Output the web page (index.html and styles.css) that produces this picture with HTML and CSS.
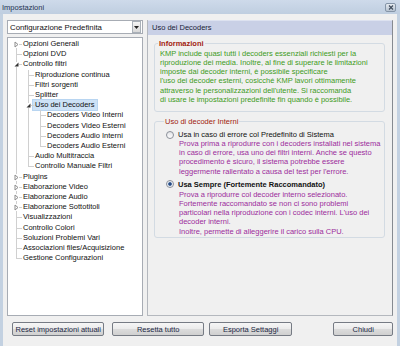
FILE: index.html
```html
<!DOCTYPE html>
<html lang="it">
<head>
  <meta charset="UTF-8">
  <title>Impostazioni</title>
  <link rel="stylesheet" href="styles.css">
</head>
<body>
  <div class="window">
    <div class="titlebar">
      <span class="title">Impostazioni</span>
      <span class="close-btn">
        <svg width="6" height="5" viewBox="0 0 6 5"><path d="M1 0.5 L5 4.5 M5 0.5 L1 4.5" stroke="#3d4a5a" stroke-width="1.1"/></svg>
      </span>
    </div>

    <div class="client">
      <div class="main">
        <div class="left-col">
          <div class="combo">
            <span class="combo-text">Configurazione Predefinita</span>
            <span class="combo-btn">
              <svg width="5" height="3" viewBox="0 0 5 3"><path d="M0 0 L5 0 L2.5 3 Z" fill="#222"/></svg>
            </span>
          </div>

          <div class="tree">
            <ul class="root">
              <li><span class="exp closed"><svg width="5" height="7" viewBox="0 0 5 7"><path d="M1 1 L4 3.5 L1 6 Z" fill="#fff" stroke="#8d8d8d"/></svg></span>Opzioni Generali</li>
              <li>Opzioni DVD</li>
              <li><span class="exp open"><svg width="5" height="5" viewBox="0 0 5 5"><path d="M4.5 0.5 L4.5 4.5 L0.5 4.5 Z" fill="#333"/></svg></span>Controllo filtri
                <ul>
                  <li>Riproduzione continua</li>
                  <li>Filtri sorgenti</li>
                  <li>Splitter</li>
                  <li><span class="exp open"><svg width="5" height="5" viewBox="0 0 5 5"><path d="M4.5 0.5 L4.5 4.5 L0.5 4.5 Z" fill="#333"/></svg></span><span class="sel">Uso dei Decoders</span>
                    <ul>
                      <li>Decoders Video Interni</li>
                      <li>Decoders Video Esterni</li>
                      <li>Decoders Audio Interni</li>
                      <li>Decoders Audio Esterni</li>
                    </ul>
                  </li>
                  <li>Audio Multitraccia</li>
                  <li>Controllo Manuale Filtri</li>
                </ul>
              </li>
              <li><span class="exp closed"><svg width="5" height="7" viewBox="0 0 5 7"><path d="M1 1 L4 3.5 L1 6 Z" fill="#fff" stroke="#8d8d8d"/></svg></span>Plugins</li>
              <li><span class="exp closed"><svg width="5" height="7" viewBox="0 0 5 7"><path d="M1 1 L4 3.5 L1 6 Z" fill="#fff" stroke="#8d8d8d"/></svg></span>Elaborazione Video</li>
              <li><span class="exp closed"><svg width="5" height="7" viewBox="0 0 5 7"><path d="M1 1 L4 3.5 L1 6 Z" fill="#fff" stroke="#8d8d8d"/></svg></span>Elaborazione Audio</li>
              <li><span class="exp closed"><svg width="5" height="7" viewBox="0 0 5 7"><path d="M1 1 L4 3.5 L1 6 Z" fill="#fff" stroke="#8d8d8d"/></svg></span>Elaborazione Sottotitoli</li>
              <li>Visualizzazioni</li>
              <li>Controllo Colori</li>
              <li>Soluzioni Problemi Vari</li>
              <li>Associazioni files/Acquisizione</li>
              <li>Gestione Configurazioni</li>
            </ul>
          </div>
        </div>

        <div class="panel">
          <div class="panel-head">Uso dei Decoders</div>

          <fieldset class="group info">
            <legend class="bold">Informazioni</legend>
            <p class="green">KMP include quasi tutti i decoders essenziali richiesti per la<br>
            riproduzione dei media. Inoltre, al fine di superare le limitazioni<br>
            imposte dai decoder interni, è possibile specificare<br>
            l'uso dei decoder esterni, cosicché KMP lavori ottimamente<br>
            attraverso le personalizzazioni dell'utente. Si raccomanda<br>
            di usare le impostazioni predefinite fin quando è possibile.</p>
          </fieldset>

          <fieldset class="group choices">
            <legend>Uso di decoder Interni</legend>
            <div class="radio-row">
              <span class="radio"></span>
              <span>Usa in caso di errore col Predefinito di Sistema</span>
            </div>
            <p class="purple">Prova prima a riprodurre con i decoders installati nel sistema<br>
            in caso di errore, usa uno dei filtri interni. Anche se questo<br>
            procedimento è sicuro, il sistema potrebbe essere<br>
            leggermente rallentato a causa del test per l'errore.</p>
            <div class="radio-row second">
              <span class="radio checked"></span>
              <span class="bold">Usa Sempre (Fortemente Raccomandato)</span>
            </div>
            <p class="purple">Prova a riprodurre col decoder interno selezionato.<br>
            Fortemente raccomandato se non ci sono problemi<br>
            particolari nella riproduzione con i codec interni. L'uso dei<br>
            decoder interni.<br>
            Inoltre, permette di alleggerire il carico sulla CPU.</p>
          </fieldset>
        </div>
      </div>

      <div class="buttons">
        <button class="btn btn-reset">Reset impostazioni attuali</button>
        <button class="btn btn-all">Resetta tutto</button>
        <button class="btn btn-export">Esporta Settaggi</button>
        <button class="btn btn-close">Chiudi</button>
      </div>
    </div>
  </div>
</body>
</html>
```

FILE: styles.css
```css
body {
  margin: 0;
  font-family: "Liberation Sans", Arial, sans-serif;
  font-size: 7.5px;
  color: #111;
}
.window {
  width: 400px;
  height: 346px;
  overflow: hidden;
  background: #f0f0f0;
}
.titlebar {
  height: 14px;
  display: flex;
  align-items: center;
  padding: 0 4px 0 2px;
  background: linear-gradient(#cedaea, #bfcee0);
  color: #1f3252;
}
.close-btn {
  margin-left: auto;
  width: 9px;
  height: 7px;
  display: flex;
  align-items: center;
  justify-content: center;
  border: 1px solid #8595a8;
  border-radius: 2px;
  background: linear-gradient(#e6ebf1, #b7c3d1);
}
.client {
  height: 329px;
  padding: 6px 4px 7px 4px;
  border: 3px solid #c3d1e1;
  border-top: none;
  background: #f0f0f0;
}
.main {
  display: flex;
  gap: 4px;
  height: 296px;
}
.left-col {
  width: 136px;
  display: flex;
  flex-direction: column;
  gap: 3px;
}
.combo {
  width: 132px;
  height: 12px;
  border: 1px solid #a7acb4;
  background: #fff;
  display: flex;
  align-items: center;
  padding-left: 2px;
  font-size: 7.8px;
}
.combo-btn {
  margin-left: auto;
  margin-right: 1px;
  width: 7px;
  height: 10px;
  border: 1px solid #a9b0b8;
  background: linear-gradient(#f4f4f4, #d8d8d8);
  display: flex;
  align-items: center;
  justify-content: center;
}
.tree {
  flex: 1;
  border: 1px solid #a7acb4;
  background: #fff;
  padding-top: 1px;
}
.tree ul {
  list-style: none;
  margin: 0;
  padding: 0;
}
.tree ul ul {
  margin-left: -3px;
}
.tree li {
  position: relative;
  padding-left: 15px;
  line-height: 10.2px;
  white-space: nowrap;
}
.tree li::before {
  content: "";
  position: absolute;
  left: 8px;
  top: 0;
  bottom: 0;
  border-left: 1px solid #d0d0d0;
}
.tree li:last-child::before {
  bottom: auto;
  height: 5px;
}
.tree .root > li:first-child::before {
  top: 5px;
}
.tree li::after {
  content: "";
  position: absolute;
  left: 8px;
  top: 5px;
  width: 6px;
  border-top: 1px solid #d0d0d0;
}
.exp {
  position: absolute;
  z-index: 1;
  background: #fff;
  display: flex;
}
.exp.closed {
  left: 6px;
  top: 2px;
}
.exp.open {
  left: 6px;
  top: 3px;
}
.sel {
  display: inline-block;
  margin-left: -2px;
  padding: 0 2px;
  background: #cde2f6;
  outline: 1px solid #b8d5f1;
}
.panel {
  flex: 1;
  border: 1px solid #b4b8be;
  border-right-color: #868a90;
  background: #f0f0f0;
}
.panel-head {
  height: 14px;
  line-height: 14px;
  padding-left: 4px;
  background: #c9d0e6;
  border-top: 1px solid #dde2f0;
  margin-top: -1px;
  color: #1a2238;
}
.group {
  margin: 4px 7px 0 6px;
  border: 1px solid #d3dbe3;
  border-radius: 3px;
  padding: 1px 4px 7px 5px;
  min-width: 0;
}
.group legend {
  padding: 0 1px;
  margin-left: -2px;
  line-height: 9px;
  color: #a1220f;
}
.bold {
  font-weight: bold;
}
.group p {
  margin: 0;
  white-space: nowrap;
}
.green {
  color: #3d9b1c;
  line-height: 9.15px;
}
.choices {
  margin-top: 5px;
  padding: 4px 4px 1px 11px;
}
.radio-row {
  display: flex;
  align-items: center;
  gap: 4px;
  height: 9.2px;
  line-height: 9.2px;
}
.radio-row.second {
  margin-top: 4px;
  margin-bottom: 1px;
}
.radio {
  width: 6px;
  height: 6px;
  border: 1px solid #8b9099;
  border-radius: 50%;
  background: linear-gradient(#e2e4e8, #fdfdfd);
}
.radio.checked {
  background: radial-gradient(circle, #23406e 0, #2d5590 1.4px, #dfe6ef 2.2px, #f6f7f9 3px);
}
.purple {
  color: #9c2c9c;
  line-height: 9.15px;
  padding-left: 13px;
}
.buttons {
  display: flex;
  margin-top: 6px;
  padding-left: 5px;
}
.btn {
  height: 14px;
  padding: 0;
  font-family: "Liberation Sans", Arial, sans-serif;
  font-size: 7.5px;
  color: #1b2744;
  border: 1px solid #767b84;
  border-radius: 2px;
  background: linear-gradient(#f6f6f6 0, #ebebeb 50%, #dcdcdc 51%, #d0d0d0 100%);
}
.btn-reset {
  width: 93px;
}
.btn-all {
  width: 92px;
  margin-left: 8px;
}
.btn-export {
  width: 84px;
  margin-left: 5px;
}
.btn-close {
  width: 60px;
  margin-left: 41px;
}
```
